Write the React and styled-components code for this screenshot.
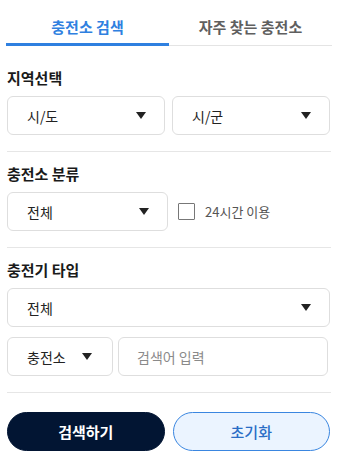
import React, { useState } from 'react'
import styled, { createGlobalStyle } from 'styled-components'

const GlobalStyle = createGlobalStyle`
  body {
    margin: 0;
    background: #fff;
    font-family: "Noto Sans CJK KR", "Noto Sans", sans-serif;
    color: #222;
  }
`

const Panel = styled.div`
  width: 326px;
  padding: 0 6px;
`

const Tabs = styled.div`
  display: flex;
  border-bottom: 1px solid #e4e4e4;
`

const Tab = styled.div`
  flex: 1;
  height: 46px;
  display: flex;
  align-items: flex-start;
  justify-content: center;
  padding-top: 16px;
  box-sizing: border-box;
  line-height: 22px;
  font-size: 15px;
  font-weight: 700;
  color: ${p => (p.$active ? '#2f80e0' : '#5f5f5f')};
  border-bottom: 3px solid ${p => (p.$active ? '#2f80e0' : 'transparent')};
  margin-bottom: -1px;
  cursor: pointer;
`

const Section = styled.div`
  margin: 0 1px;
  padding: ${p => (p.$first ? '21px' : '11px')} 0 16px;
  border-bottom: 1px solid #e6e6e6;
`

const Heading = styled.div`
  font-size: 15px;
  font-weight: 700;
  line-height: 22px;
  color: #1a1a1a;
  margin-bottom: 7px;
`

const Row = styled.div`
  display: flex;
  align-items: center;
  gap: ${p => p.$gap || 7}px;
  margin-top: ${p => p.$mt || 0}px;
  padding-right: ${p => p.$pr || 0}px;
`

const SelectBox = styled.div`
  flex: ${p => (p.$w ? `0 0 ${p.$w}px` : 1)};
  height: 39px;
  box-sizing: border-box;
  border: 1px solid #dedede;
  border-radius: 6px;
  display: flex;
  align-items: center;
  justify-content: space-between;
  padding: 0 ${p => p.$pr || 18}px 0 19px;
  font-size: 14px;
  color: #222;
`

const Arrow = styled.span`
  width: 0;
  height: 0;
  border-left: 5px solid transparent;
  border-right: 5px solid transparent;
  border-top: 7px solid #222;
`

const Check = styled.span`
  width: 17px;
  height: 17px;
  box-sizing: border-box;
  border: 1px solid #777;
  border-radius: 1px;
  margin-left: 1px;
`

const CheckLabel = styled.label`
  display: flex;
  align-items: center;
  gap: 10px;
  font-size: 13px;
  color: #555;
`

const Input = styled.input`
  flex: 1;
  min-width: 0;
  height: 39px;
  box-sizing: border-box;
  border: 1px solid #dedede;
  border-radius: 6px;
  padding: 0 0 0 18px;
  font-family: inherit;
  font-size: 14px;
  color: #222;
  outline: none;
  &::placeholder {
    color: #8a8a8a;
  }
`

const Buttons = styled.div`
  display: flex;
  gap: 8px;
  padding: 19px 2px 0 1px;
`

const Button = styled.button`
  flex: 1;
  height: 39px;
  border-radius: 20px;
  font-family: inherit;
  font-size: 15px;
  font-weight: ${p => (p.$primary ? 700 : 500)};
  cursor: pointer;
  border: 1px solid ${p => (p.$primary ? '#021533' : '#3a86e0')};
  background: ${p => (p.$primary ? '#021533' : '#ebf4ff')};
  color: ${p => (p.$primary ? '#fff' : '#2a6dc6')};
`

function Select({ label, w, pr }) {
  return (
    <SelectBox $w={w} $pr={pr}>
      <span>{label}</span>
      <Arrow />
    </SelectBox>
  )
}

export default function App() {
  const [tab, setTab] = useState(0)
  return (
    <Panel>
      <GlobalStyle />
      <Tabs>
        <Tab $active={tab === 0} onClick={() => setTab(0)}>충전소 검색</Tab>
        <Tab $active={tab === 1} onClick={() => setTab(1)}>자주 찾는 충전소</Tab>
      </Tabs>

      <Section $first>
        <Heading>지역선택</Heading>
        <Row $pr={1}>
          <Select label="시/도" />
          <Select label="시/군" />
        </Row>
      </Section>

      <Section>
        <Heading>충전소 분류</Heading>
        <Row $gap={9}>
          <Select label="전체" w={161} />
          <CheckLabel>
            <Check />
            24시간 이용
          </CheckLabel>
        </Row>
      </Section>

      <Section>
        <Heading>충전기 타입</Heading>
        <Row $pr={1}>
          <Select label="전체" />
        </Row>
        <Row $mt={10} $gap={5} $pr={3}>
          <Select label="충전소" w={106} pr={20} />
          <Input placeholder="검색어 입력" />
        </Row>
      </Section>

      <Buttons>
        <Button $primary>검색하기</Button>
        <Button>초기화</Button>
      </Buttons>
    </Panel>
  )
}
